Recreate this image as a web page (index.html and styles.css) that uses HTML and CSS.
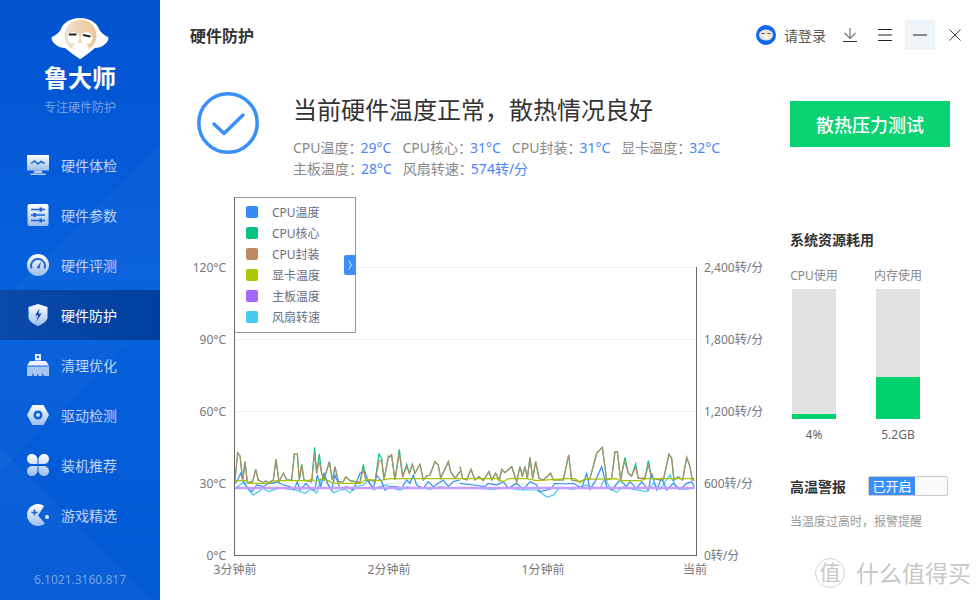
FILE: index.html
```html
<!DOCTYPE html>
<html lang="zh-CN">
<head>
<meta charset="utf-8">
<title>鲁大师</title>
<link rel="stylesheet" href="styles.css">
</head>
<body>
<svg class="defs" width="0" height="0" aria-hidden="true">
  <defs>
    <linearGradient id="ig" x1="0" y1="0" x2="0" y2="1">
      <stop offset="0" stop-color="#ffffff"/>
      <stop offset="1" stop-color="#9cbdee"/>
    </linearGradient>
    <linearGradient id="face" x1="0" y1="0" x2="1" y2="0">
      <stop offset="0" stop-color="#f0dfcf"/>
      <stop offset="1" stop-color="#ecc697"/>
    </linearGradient>
  </defs>
</svg>
<div class="app">
  <aside class="sidebar">
    <div class="brand">
      <svg class="mascot" width="58" height="42" viewBox="0 0 58 42">
        <path d="M29 0C39 0 46 5 48 11c2 4 5 6 9 8 1 1 0 5-3 7-3 3-7 4-10 4-5 4-10 8-15 11-5-3-10-7-15-11-3 0-7-1-10-4-3-2-4-6-3-7 4-2 7-4 9-8C12 5 19 0 29 0z" fill="#fff"/>
        <circle cx="29.500" cy="17.500" r="16" fill="url(#face)"/>
        <circle cx="22.500" cy="20" r="6" fill="#fff"/>
        <circle cx="35.500" cy="20" r="6" fill="#fff"/>
        <path d="M18 16.500h7.500M32 17l7.500 1.500" stroke="#222" stroke-width="2"/>
        <path d="M29.500 25c5-1 9 3 8 7-1 4-5 7-8 9-3-2-7-5-8-9-1-4 3-8 8-7z" fill="#fff"/>
      </svg>
      <div class="brand-name">鲁大师</div>
      <div class="brand-tag">专注硬件防护</div>
    </div>
    <nav class="nav">
      <a class="nav-item">
        <svg class="nav-icon" viewBox="0 0 22 22"><path d="M0 1h22v15.500H0z" fill="url(#ig)"/><path d="M7 20h8v-3.500H7zM3.500 19.500h15V21h-15z" fill="#b8cff2"/><path d="M4 9.500l3.500-2.500 3.500 3 3-2.500 3.500 2" fill="none" stroke="#1a62d6" stroke-width="1.500"/></svg>
        <span>硬件体检</span>
      </a>
      <a class="nav-item">
        <svg class="nav-icon" viewBox="0 0 22 22"><rect x="0.500" y="0" width="21" height="22" rx="2" fill="url(#ig)"/><path d="M4 5.500h14M4 11h14M4 16.500h14" stroke="#1a62d6" stroke-width="1.500"/><path d="M12.500 3.500h2.500v4h-2.500zM6.500 9h2.500v4H6.500zM12.500 14.500h2.500v4h-2.500z" fill="#1a62d6"/></svg>
        <span>硬件参数</span>
      </a>
      <a class="nav-item">
        <svg class="nav-icon" viewBox="0 0 22 22"><circle cx="11" cy="11" r="11" fill="url(#ig)"/><path d="M4.500 14.500a7 7 0 1 1 13 0" fill="none" stroke="#1a62d6" stroke-width="1.800"/><path d="M9.700 13.800l4.500-6.500-1.700 7.500z" fill="#1a62d6"/></svg>
        <span>硬件评测</span>
      </a>
      <a class="nav-item is-active">
        <svg class="nav-icon" viewBox="0 0 22 22"><path d="M11 0l9.500 3v10c0 4-4.500 7-9.500 9-5-2-9.500-5-9.500-9V3z" fill="url(#ig)"/><path d="M12.500 4.500l-4.500 7h3l-1.500 6 5-8h-3z" fill="#0d4fb4"/></svg>
        <span>硬件防护</span>
      </a>
      <a class="nav-item">
        <svg class="nav-icon" viewBox="0 0 22 22"><path fill-rule="evenodd" d="M8 0h6v6.500H8zM11 1.700a1.200 1.200 0 1 0 0 2.400 1.200 1.200 0 0 0 0-2.400z" fill="#e6effc"/><path d="M3 7h16l3 4.500H0z" fill="#eef4fd"/><path d="M0 12.500h22V22H17l-1.500-3-.5 3h-3.500l-.5-3-1 3H7l-1-3-1 3H0z" fill="#a8c5f1"/></svg>
        <span>清理优化</span>
      </a>
      <a class="nav-item">
        <svg class="nav-icon" viewBox="0 0 22 22"><path fill-rule="evenodd" d="M5.500 1h11L22 11l-5.500 10h-11L0 11zM11 6.500a4.500 4.500 0 1 0 0 9 4.500 4.500 0 0 0 0-9zM11 9a2 2 0 1 1 0 4 2 2 0 0 1 0-4z" fill="url(#ig)"/></svg>
        <span>驱动检测</span>
      </a>
      <a class="nav-item">
        <svg class="nav-icon" viewBox="0 0 22 22"><path d="M5 0c3 0 5.500 2.500 5.500 5.500v4.500H5.500C2.500 10 0 8 0 5s2-5 5-5zM17 0c3 0 5 2 5 5s-2.500 5-5.500 5h-5V5.500C11.500 2.500 14 0 17 0zM5.500 12h5v4.500C10.500 19.500 8 22 5 22s-5-2-5-5 2.500-5 5.500-5zM11.500 12h5c3 0 5.500 2 5.500 5s-2 5-5 5-5.500-2.500-5.500-5.500z" fill="url(#ig)"/></svg>
        <span>装机推荐</span>
      </a>
      <a class="nav-item">
        <svg class="nav-icon" viewBox="0 0 22 22"><path d="M11 0c2.500 0 4.500.8 6 2.200L11 11.500l7 8C16 21 13.500 22 11 22 5 22 0 17 0 11S5 0 11 0z" fill="url(#ig)"/><circle cx="20" cy="13" r="2" fill="#dfe9fb"/><path d="M7.500 5.500v6M4.500 8.500h6" stroke="#1a62d6" stroke-width="1.600"/></svg>
        <span>游戏精选</span>
      </a>
    </nav>
    <div class="version">6.1021.3160.817</div>
  </aside>

  <main class="main">
    <header class="topbar">
      <h1 class="page-title">硬件防护</h1>
      <div class="tools">
        <svg class="avatar" width="20" height="20" viewBox="0 0 20 20"><circle cx="10" cy="10" r="10" fill="#0f66f0"/><ellipse cx="10" cy="10" rx="7" ry="5.500" fill="#f3e3d2"/><path d="M5.500 8.500h3M11.500 8.500h3" stroke="#555" stroke-width="1"/><circle cx="10" cy="12" r="2" fill="#fff"/></svg>
        <span class="login">请登录</span>
        <svg class="tool-icon download" width="14" height="14" viewBox="0 0 14 14"><path d="M7 0v10M1.500 5l5.500 5.500L12.500 5" fill="none" stroke="#777" stroke-width="1.200"/><path d="M0 13.500h14" stroke="#333" stroke-width="1"/></svg>
        <svg class="tool-icon menu" width="14" height="12" viewBox="0 0 14 12"><path d="M0 .5h14M0 6h14M0 11.500h14" stroke="#222" stroke-width="1"/></svg>
        <div class="win-btn"><svg width="14" height="2" viewBox="0 0 14 2"><path d="M0 1h14" stroke="#222" stroke-width="1"/></svg></div>
        <svg class="tool-icon close" width="12" height="12" viewBox="0 0 12 12"><path d="M.5.500l11 11M11.500.500l-11 11" stroke="#444" stroke-width="1"/></svg>
      </div>
    </header>

    <section class="status">
      <svg class="status-icon" width="62" height="62" viewBox="0 0 62 62"><circle cx="31" cy="31" r="29.200" fill="none" stroke="#3b8ffa" stroke-width="3.500"/><path d="M17 32l10 9.500L46 23" fill="none" stroke="#3b8ffa" stroke-width="3.500" stroke-linecap="round" stroke-linejoin="round"/></svg>
      <div class="status-text">
        <h2 class="status-title">当前硬件温度正常，散热情况良好</h2>
        <p class="status-line"><span class="stat">CPU温度：<b>29°C</b></span><span class="stat">CPU核心：<b>31°C</b></span><span class="stat">CPU封装：<b>31°C</b></span><span class="stat">显卡温度：<b>32°C</b></span></p>
        <p class="status-line"><span class="stat">主板温度：<b>28°C</b></span><span class="stat">风扇转速：<b>574转/分</b></span></p>
      </div>
      <button class="stress-btn">散热压力测试</button>
    </section>

    <section class="body">
      <div class="chart">
        <svg class="plot" width="580" height="400" viewBox="190 190 580 400">
          <g class="grid">
            <path d="M235 267.500h461M235 339.500h461M235 411.500h461M235 483.500h461"/>
          </g>
          <g class="series" transform="translate(200 430) scale(.33333)">
            <polyline class="s-cyan" points="105,175 120,165 132,155 145,180 160,195 175,185 190,175 205,185 225,178 245,172 265,178 285,178 300,185 315,190 335,175 350,190 362,150 375,135 385,165 400,188 420,180 435,178 450,188 470,170 490,165 505,150 520,180 540,170 560,165 580,175 600,180 620,170 640,175 660,172 690,178 720,170 750,175 780,172"/>
            <polyline class="s-blue" points="105,160 113,150 122,130 130,155 140,170 155,185 170,165 190,170 205,160 220,160 230,155 250,165 270,170 282,180 292,155 300,180 318,160 335,180 345,180 352,135 362,170 372,130 382,160 395,180 405,135 420,175 440,170 460,180 480,130 495,125 505,155 520,175 530,135 545,155 555,180 570,170 590,170 605,175 620,150 630,160 640,135 650,165 670,175 685,155 700,170 715,160 730,150 745,170 760,155 780,150"/>
            <path class="s-purple" d="M105 174h675"/>
            <polyline class="s-green" points="105,150 113,68 120,78 128,150 135,95 142,158 158,155 167,118 175,150 190,158 197,153 205,158 220,150 228,88 237,155 250,130 260,150 275,150 283,72 292,72 298,150 305,103 312,150 335,155 344,52 350,130 358,72 365,130 372,150 388,95 397,150 405,110 415,155 430,155 437,140 450,152 480,158 490,103 497,150 510,150 525,155 537,72 545,85 552,150 565,78 575,80 585,150 598,58 608,140 620,103 628,130 637,103 645,130 660,103 670,150 680,138 690,135 705,95 715,105 722,145 745,95 752,125 765,145 780,125"/>
            <polyline class="s-brown" points="105,150 113,68 120,78 128,150 135,95 142,158 158,155 167,118 175,150 190,158 197,153 205,158 220,150 228,88 237,155 250,130 260,150 275,150 283,72 292,72 298,150 305,103 312,150 335,155 344,70 350,130 358,95 365,130 372,150 388,95 397,150 405,110 415,155 430,155 437,140 450,152 480,158 490,115 497,150 510,150 525,155 537,95 545,90 552,150 565,85 575,73 585,150 598,70 608,140 620,110 628,130 637,103 645,130 660,103 670,150 680,138 690,135 705,95 715,105 722,145 745,95 752,125 765,145 780,125"/>
            <polyline class="s-yellow" points="105,152 140,152 145,160 175,160 200,160 230,152 325,152 335,146 345,155 365,146 385,152 400,160 440,160 480,160 500,148 540,152 570,146 780,146"/>
          </g>
          <g class="series" transform="translate(460 430) scale(.33333)">
            <polyline class="s-cyan" points="0,172 50,175 100,178 140,172 180,180 230,180 245,190 262,202 280,195 300,172 340,178 380,165 400,175 420,175 435,145 450,175 470,187 490,170 520,178 560,185 580,160 600,178 630,135 650,175 680,178 703,172"/>
            <polyline class="s-blue" points="0,160 40,165 75,170 85,160 110,165 130,155 145,175 170,160 190,178 210,155 230,165 240,185 270,178 285,160 310,162 340,160 365,175 380,130 390,178 405,155 425,110 440,170 455,180 480,150 500,170 510,155 530,175 545,155 565,180 575,130 590,180 605,145 620,180 640,160 660,178 680,160 695,155 703,170"/>
            <path class="s-purple" d="M0 174h703"/>
            <polyline class="s-green" points="0,110 8,145 20,150 33,118 45,150 57,140 70,152 87,125 95,150 107,130 118,152 125,118 135,128 155,110 170,155 180,110 187,140 195,110 202,145 210,82 218,145 227,95 237,145 250,150 272,130 280,150 310,150 326,75 335,150 360,155 372,150 390,145 410,70 427,52 440,150 455,145 465,65 472,65 482,150 495,82 505,130 515,138 527,102 535,145 555,145 565,92 575,145 600,150 610,150 627,73 635,85 642,150 655,140 668,150 680,82 690,110 697,150 703,150"/>
            <polyline class="s-brown" points="0,110 8,145 20,150 33,118 45,150 57,140 70,152 87,125 95,150 107,130 118,152 125,118 135,128 155,110 170,155 180,110 187,140 195,110 202,145 210,82 218,145 227,95 237,145 250,150 272,130 280,150 310,150 326,75 335,150 360,155 372,150 390,145 410,70 427,52 440,150 455,145 465,65 472,65 482,150 493,92 505,130 515,138 527,112 535,145 555,145 565,105 575,145 600,150 610,150 627,73 635,85 642,150 655,140 668,150 680,82 690,110 697,150 703,150"/>
            <polyline class="s-yellow" points="0,146 110,146 130,155 145,146 200,146 230,152 320,146 345,146 360,158 372,148 470,146 480,152 540,152 560,146 703,146"/>
          </g>
          <path class="axis" d="M234.500 267v288.500M234 555.500h462.500M696.500 267v289"/>
          <g class="labels">
            <text x="226" y="272" text-anchor="end">120°C</text>
            <text x="226" y="344" text-anchor="end">90°C</text>
            <text x="226" y="416" text-anchor="end">60°C</text>
            <text x="226" y="488" text-anchor="end">30°C</text>
            <text x="226" y="560" text-anchor="end">0°C</text>
            <text x="704" y="272">2,400转/分</text>
            <text x="704" y="344">1,800转/分</text>
            <text x="704" y="416">1,200转/分</text>
            <text x="704" y="488">600转/分</text>
            <text x="704" y="560">0转/分</text>
            <text x="235" y="574" text-anchor="middle">3分钟前</text>
            <text x="389" y="574" text-anchor="middle">2分钟前</text>
            <text x="543" y="574" text-anchor="middle">1分钟前</text>
            <text x="695" y="574" text-anchor="middle">当前</text>
          </g>
        </svg>
        <ul class="legend">
          <li><i class="sw sw-blue"></i>CPU温度</li>
          <li><i class="sw sw-green"></i>CPU核心</li>
          <li><i class="sw sw-brown"></i>CPU封装</li>
          <li><i class="sw sw-yellow"></i>显卡温度</li>
          <li><i class="sw sw-purple"></i>主板温度</li>
          <li><i class="sw sw-cyan"></i>风扇转速</li>
          <li class="legend-tab"><svg width="4" height="10" viewBox="0 0 4 10"><path d="M.5.500L3.500 5 .5 9.500" fill="none" stroke="#fff" stroke-width=".8"/></svg></li>
        </ul>
      </div>

      <aside class="panel">
        <h3 class="panel-title">系统资源耗用</h3>
        <div class="meters">
          <div class="meter">
            <div class="meter-name">CPU使用</div>
            <div class="meter-bar"><div class="meter-fill" style="height:5px"></div></div>
            <div class="meter-value">4%</div>
          </div>
          <div class="meter">
            <div class="meter-name">内存使用</div>
            <div class="meter-bar"><div class="meter-fill" style="height:42px"></div></div>
            <div class="meter-value">5.2GB</div>
          </div>
        </div>
        <div class="alarm">
          <span class="alarm-title">高温警报</span>
          <div class="switch"><span class="switch-on">已开启</span></div>
        </div>
        <p class="alarm-note">当温度过高时，报警提醒</p>
      </aside>
    </section>
    <div class="watermark">
      <span class="wm-badge">值</span><span class="wm-text">什么值得买</span>
    </div>
  </main>
</div>
</body>
</html>
```

FILE: styles.css
```css
* { box-sizing: border-box; }
html, body { margin: 0; padding: 0; }
body {
  width: 980px;
  height: 600px;
  overflow: hidden;
  background: #fff;
  font-family: "Noto Sans", "Noto Sans CJK SC", sans-serif;
}
.defs { position: absolute; }
.app { display: flex; width: 980px; height: 600px; }

/* Sidebar */
.sidebar {
  width: 160px;
  height: 600px;
  display: flex;
  flex-direction: column;
  background-color: #0259d4;
  background-image:
    linear-gradient(45deg, rgba(255,255,255,.03) 0 20%, transparent 20% 100%),
    linear-gradient(135deg, transparent 0 40%, rgba(255,255,255,.02) 40% 62%, transparent 62% 100%),
    linear-gradient(180deg, #0253d0 0, #0660dc 45%, #0259d4 100%);
}
.brand { display: flex; flex-direction: column; align-items: center; height: 140px; padding-top: 18px; }
.mascot { display: block; }
.brand-name { color: #fff; font-size: 24px; font-weight: 700; line-height: 30px; margin-top: 3px; }
.brand-tag { color: rgba(255,255,255,.45); font-size: 12px; line-height: 18px; margin-top: 6px; }
.nav { display: flex; flex-direction: column; }
.nav-item {
  display: flex;
  align-items: center;
  height: 50px;
  padding-left: 27px;
  gap: 12px;
  color: #bfd4f7;
  font-size: 14px;
}
.nav-icon { width: 22px; height: 22px; flex: none; }
.nav-item.is-active {
  color: #fff;
  background: linear-gradient(90deg, #0b4aa8, #003f9f);
}
.version {
  margin-top: auto;
  padding-bottom: 11px;
  text-align: center;
  color: rgba(255,255,255,.42);
  font-size: 12px;
  line-height: 18px;
}

/* Main */
.main { flex: 1; position: relative; display: flex; flex-direction: column; padding-left: 30px; }
.topbar { height: 70px; display: flex; align-items: center; justify-content: space-between; flex: none; }
.page-title { margin: 0; font-size: 16px; font-weight: 700; color: #333; }
.tools { display: flex; align-items: center; padding-right: 19px; }
.login { font-size: 14px; color: #555; margin-left: 8px; }
.download { margin-left: 17px; }
.menu { margin-left: 21px; }
.win-btn { width: 30px; height: 30px; margin-left: 13px; background: #eff4f9; display: flex; align-items: center; justify-content: center; }
.close { margin-left: 14px; }

.status { display: flex; height: 120px; padding-top: 22px; flex: none; padding-right: 30px; }
.status-icon { margin-left: 7px; flex: none; }
.status-text { margin-left: 34px; width: 497px; flex: none; }
.status-title { margin: 0 0 9px; font-size: 24px; font-weight: 400; line-height: 36px; color: #333; }
.status-line { margin: 0; display: flex; gap: 11px; font-size: 14px; line-height: 21px; color: #888; }
.stat b { font-weight: 400; color: #4a86f7; margin-left: -2px; }
.stress-btn {
  width: 160px;
  height: 46px;
  margin-top: 9px;
  margin-left: auto;
  border: 0;
  background: #0bd273;
  color: #fff;
  font: 500 18px "Noto Sans CJK SC", sans-serif;
  flex: none;
}

.body { display: flex; flex: 1; min-height: 0; }
.chart { position: relative; width: 580px; height: 400px; flex: none; }
.plot { display: block; }
.grid path { stroke: #eeeeee; fill: none; }
.axis { stroke: #666; fill: none; }
.labels text { font-size: 12px; fill: #777; }
.series polyline, .series path { fill: none; vector-effect: non-scaling-stroke; stroke-width: 1.2; }
.s-cyan { stroke: #45cbf2; }
.s-blue { stroke: #348df2; }
.series .s-purple { stroke: #c89cff; stroke-width: 2.5; }
.s-green { stroke: #08c27e; }
.s-brown { stroke: #bd8a64; stroke-opacity: .9; }
.s-yellow { stroke: #a8c400; }

.legend {
  position: absolute;
  left: 44px;
  top: 7px;
  width: 122px;
  height: 136px;
  margin: 0;
  padding: 3px 0 0 11px;
  list-style: none;
  background: #fff;
  border: 1px solid #999;
  border-left-color: #666;
  font-size: 12px;
  color: #667088;
}
.legend li { display: flex; align-items: center; height: 21px; }
.sw { width: 12px; height: 12px; border-radius: 2px; margin-right: 14px; flex: none; }
.sw-blue { background: #338cf2; }
.sw-green { background: #08c27e; }
.sw-brown { background: #bd8a64; }
.sw-yellow { background: #aec800; }
.sw-purple { background: #a468ff; }
.sw-cyan { background: #45cbf2; }
.legend li.legend-tab {
  position: absolute;
  right: -1px;
  top: 57px;
  width: 12px;
  height: 20px;
  background: #3b8ffa;
  border-radius: 2px 0 0 2px;
  justify-content: center;
}

.panel { width: 160px; margin-left: 20px; flex: none; padding-top: 40px; }
.panel-title { margin: 0; font-size: 14px; font-weight: 700; line-height: 20px; color: #333; }
.meters { display: flex; gap: 40px; margin-top: 17px; padding-left: 2px; }
.meter { width: 44px; display: flex; flex-direction: column; align-items: center; }
.meter-name { font-size: 12px; line-height: 18px; color: #888; white-space: nowrap; }
.meter-bar { width: 44px; height: 130px; margin-top: 4px; background: #e2e2e2; display: flex; align-items: flex-end; }
.meter-fill { width: 100%; background: #00d26e; }
.meter-value { font-size: 12px; line-height: 18px; color: #666; margin-top: 7px; white-space: nowrap; }
.alarm { display: flex; align-items: center; margin-top: 32px; }
.alarm-title { font-size: 14px; font-weight: 700; color: #333; width: 78px; }
.switch { width: 80px; height: 20px; border: 1px solid #ccc; border-radius: 2px; background: #fafafa; display: flex; }
.switch-on { width: 46px; background: #3b8ffa; color: #fff; font-size: 13px; line-height: 18px; text-align: center; }
.alarm-note { margin: 16px 0 0; font-size: 12px; line-height: 20px; color: #999; }

.watermark {
  position: absolute;
  left: 655px;
  top: 558px;
  display: flex;
  align-items: center;
  color: #c8c8c8;
}
.wm-badge { width: 30px; height: 30px; border: 1.500px solid #d4d4d4; border-radius: 50%; font-size: 21px; line-height: 26px; text-align: center; margin-right: 11px; }
.wm-text { font-size: 23px; line-height: 30px; white-space: nowrap; }
```
